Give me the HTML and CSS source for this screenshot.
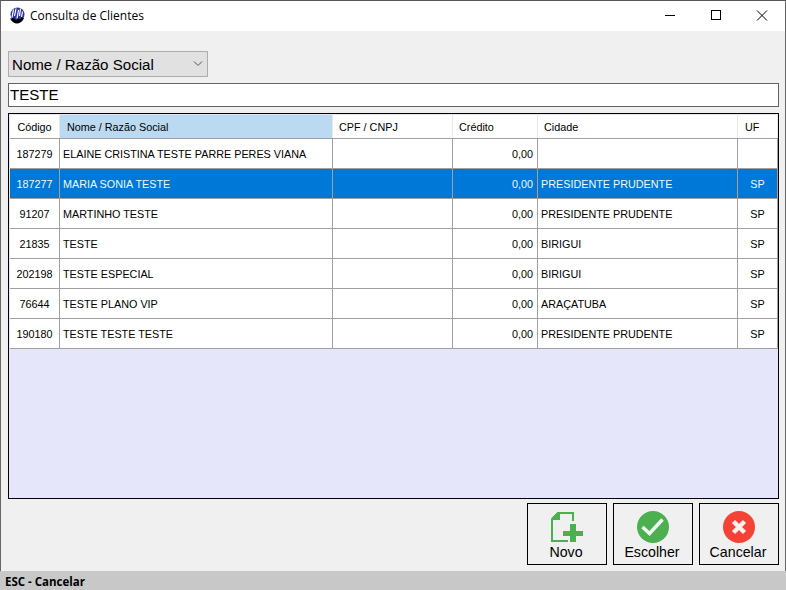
FILE: index.html
```html
<!DOCTYPE html>
<html lang="pt-BR">
<head>
<meta charset="utf-8">
<title>Consulta de Clientes</title>
<link rel="stylesheet" href="styles.css">
</head>
<body>
<div class="window">
  <header class="titlebar">
    <svg class="app-icon" width="16" height="17" viewBox="0 0 16 17">
      <circle cx="8.500" cy="7.500" r="7" fill="#2f33a8"/>
      <path d="M1 11.500q3 5 7 5t7-5l-2-1.500-2 2.500-2-1.500-2 2.500-2-2.500z" fill="#000"/>
      <path d="M4.500 2.500l-1.500 8M7 1.500l-1.500 7.500M9.500 3l-1.500 8.500M11.500 1.500l-1 7.500M13.500 4.500l-1 5.500" stroke="#fff" stroke-width="1.200" fill="none"/>
    </svg>
    <span class="title">Consulta de Clientes</span>
    <div class="controls">
      <svg class="ctl" width="46" height="31" viewBox="0 0 46 31"><path d="M18 15.500h10" stroke="#000" fill="none"/></svg>
      <svg class="ctl" width="46" height="31" viewBox="0 0 46 31"><rect x="18.500" y="10.500" width="9" height="9" stroke="#000" fill="none"/></svg>
      <svg class="ctl" width="46" height="31" viewBox="0 0 46 31"><path d="M18 10.500l10 10M28 10.500l-10 10" stroke="#000" fill="none"/></svg>
    </div>
  </header>
  <main class="content">
    <div class="combo"><span class="combo-text">Nome / Razão Social</span>
      <svg width="10" height="6" viewBox="0 0 10 6"><path d="M1 .5l4 4 4-4" stroke="#555" fill="none"/></svg>
    </div>
    <div class="search">TESTE</div>
    <div class="grid">
      <table>
        <colgroup>
          <col class="c1"><col class="c2"><col class="c3"><col class="c4"><col class="c5"><col class="c6">
        </colgroup>
        <thead>
          <tr>
            <th class="ctr">Código</th><th class="sorted">Nome / Razão Social</th><th>CPF / CNPJ</th><th>Crédito</th><th>Cidade</th><th class="uf">UF</th>
          </tr>
        </thead>
        <tbody>
          <tr><td class="ctr">187279</td><td>ELAINE CRISTINA TESTE PARRE PERES VIANA</td><td></td><td class="num">0,00</td><td></td><td class="ctr"></td></tr>
          <tr class="sel"><td class="ctr">187277</td><td>MARIA SONIA TESTE</td><td></td><td class="num">0,00</td><td>PRESIDENTE PRUDENTE</td><td class="ctr">SP</td></tr>
          <tr><td class="ctr">91207</td><td>MARTINHO TESTE</td><td></td><td class="num">0,00</td><td>PRESIDENTE PRUDENTE</td><td class="ctr">SP</td></tr>
          <tr><td class="ctr">21835</td><td>TESTE</td><td></td><td class="num">0,00</td><td>BIRIGUI</td><td class="ctr">SP</td></tr>
          <tr><td class="ctr">202198</td><td>TESTE ESPECIAL</td><td></td><td class="num">0,00</td><td>BIRIGUI</td><td class="ctr">SP</td></tr>
          <tr><td class="ctr">76644</td><td>TESTE PLANO VIP</td><td></td><td class="num">0,00</td><td>ARAÇATUBA</td><td class="ctr">SP</td></tr>
          <tr><td class="ctr">190180</td><td>TESTE TESTE TESTE</td><td></td><td class="num">0,00</td><td>PRESIDENTE PRUDENTE</td><td class="ctr">SP</td></tr>
        </tbody>
      </table>
    </div>
    <div class="actions">
      <button class="btn" type="button">
        <svg class="ico-new" width="32" height="30" viewBox="0 0 32 30">
          <path d="M6 1h16v8M1 7v22h16M1 7l6-6" stroke="#4caf50" stroke-width="2" fill="none"/>
          <path d="M0 7L7 0h2v8H0z" fill="#4caf50"/>
          <path d="M19 12h6v7h7v5h-7v6h-6v-6h-7v-5h7z" fill="#4caf50"/>
        </svg>
        <span>Novo</span>
      </button>
      <button class="btn" type="button">
        <svg width="32" height="32" viewBox="0 0 32 32">
          <circle cx="16" cy="16" r="16" fill="#4caf50"/>
          <path d="M5.500 16l7 6.500L25.500 8.500" stroke="#f0f5f0" stroke-width="3.500" fill="none"/>
        </svg>
        <span>Escolher</span>
      </button>
      <button class="btn" type="button">
        <svg width="32" height="32" viewBox="0 0 32 32">
          <circle cx="16" cy="16" r="16" fill="#f44336"/>
          <path d="M10.500 10.500l11 11M21.500 10.500l-11 11" stroke="#fdf0ee" stroke-width="4.500" fill="none"/>
        </svg>
        <span>Cancelar</span>
      </button>
    </div>
  </main>
  <footer class="status">ESC - Cancelar</footer>
</div>
</body>
</html>
```
FILE: styles.css
```css
* { box-sizing: border-box; }
html, body { margin: 0; padding: 0; }
body { width: 786px; height: 590px; overflow: hidden; background: #f0f0f0; }
.window {
  width: 786px; height: 590px;
  display: flex; flex-direction: column;
  border-top: 1px solid #555;
  border-left: 1px solid #666;
  border-right: 1px solid #666;
  background: #f0f0f0;
  color: #000;
}
.titlebar {
  height: 30px; flex: none;
  background: #fff;
  display: flex; align-items: center;
  padding-left: 8px;
}
.app-icon { flex: none; margin-top: -1px; }
.title { font: 12px "Open Sans", sans-serif; margin-left: 5px; margin-top: -1px; }
.controls { margin-left: auto; display: flex; margin-top: -1px; }
.ctl { display: block; }
.content {
  flex: 1; min-height: 0;
  display: flex; flex-direction: column;
  padding: 20px 6px 6px 7px;
  background: #f0f0f0;
}
.combo {
  width: 200px; height: 26px;
  background: #e1e1e1;
  border: 1px solid #adadad;
  display: flex; align-items: center; justify-content: space-between;
  padding: 0 4px 0 3px;
  font: 15.100px "Liberation Sans", sans-serif;
}
.combo-text { padding-top: 1px; }
.search {
  margin-top: 6px;
  height: 24px;
  background: #fff;
  border: 1px solid #646464;
  padding-left: 1px;
  font: 15.100px/22px "Liberation Sans", sans-serif;
}
.grid {
  margin-top: 6px;
  height: 386px;
  background: #e6e6fa;
  border: 1px solid #000;
  padding: 1px 1px 0 1px;
  overflow: hidden;
}
table {
  width: 768px;
  table-layout: fixed;
  border-collapse: separate;
  border-spacing: 0;
  font: 10.800px "Liberation Sans", sans-serif;
}
.c1 { width: 50px; } .c2 { width: 273px; } .c3 { width: 120px; }
.c4 { width: 85px; } .c5 { width: 200px; } .c6 { width: 40px; }
th {
  height: 23px; padding: 1px 0 0 6px;
  background: #fff;
  font-weight: 400; text-align: left;
  border-right: 1px solid #e8e8e8;
  white-space: nowrap;
}
th.sorted { background: #bbd9f1; padding-left: 7px; }
th.uf { padding-left: 7px; }
th.ctr { padding-left: 0; }
td {
  height: 30px; padding: 0 3px;
  background: #fff;
  border-top: 1px solid #a0a0a0;
  border-right: 1px solid #a0a0a0;
  white-space: nowrap;
}
tr:last-child td { height: 31px; border-bottom: 1px solid #a0a0a0; }
.ctr { text-align: center; }
td.num { text-align: right; padding-right: 4px; }
tr.sel td { background: #0078d7; color: #f2f8fd; }
.actions {
  margin-top: 4px;
  display: flex; justify-content: flex-end; gap: 6px;
}
.btn {
  width: 80px; height: 62px;
  background: #f0f0f0;
  border: 1px solid #000;
  padding: 7px 0 0;
  display: flex; flex-direction: column; align-items: center;
  font: 14.200px "Liberation Sans", sans-serif;
  color: #000;
}
.btn svg { display: block; flex: none; }
.btn .ico-new { margin: 1px 0; }
.btn span { margin-right: 2px; line-height: 18px; }
.status {
  height: 19px; flex: none;
  background: #c8c8c8;
  margin: 0 -1px;
  padding-left: 5px;
  font: 700 11.500px/21px "Open Sans", sans-serif;
}
```
